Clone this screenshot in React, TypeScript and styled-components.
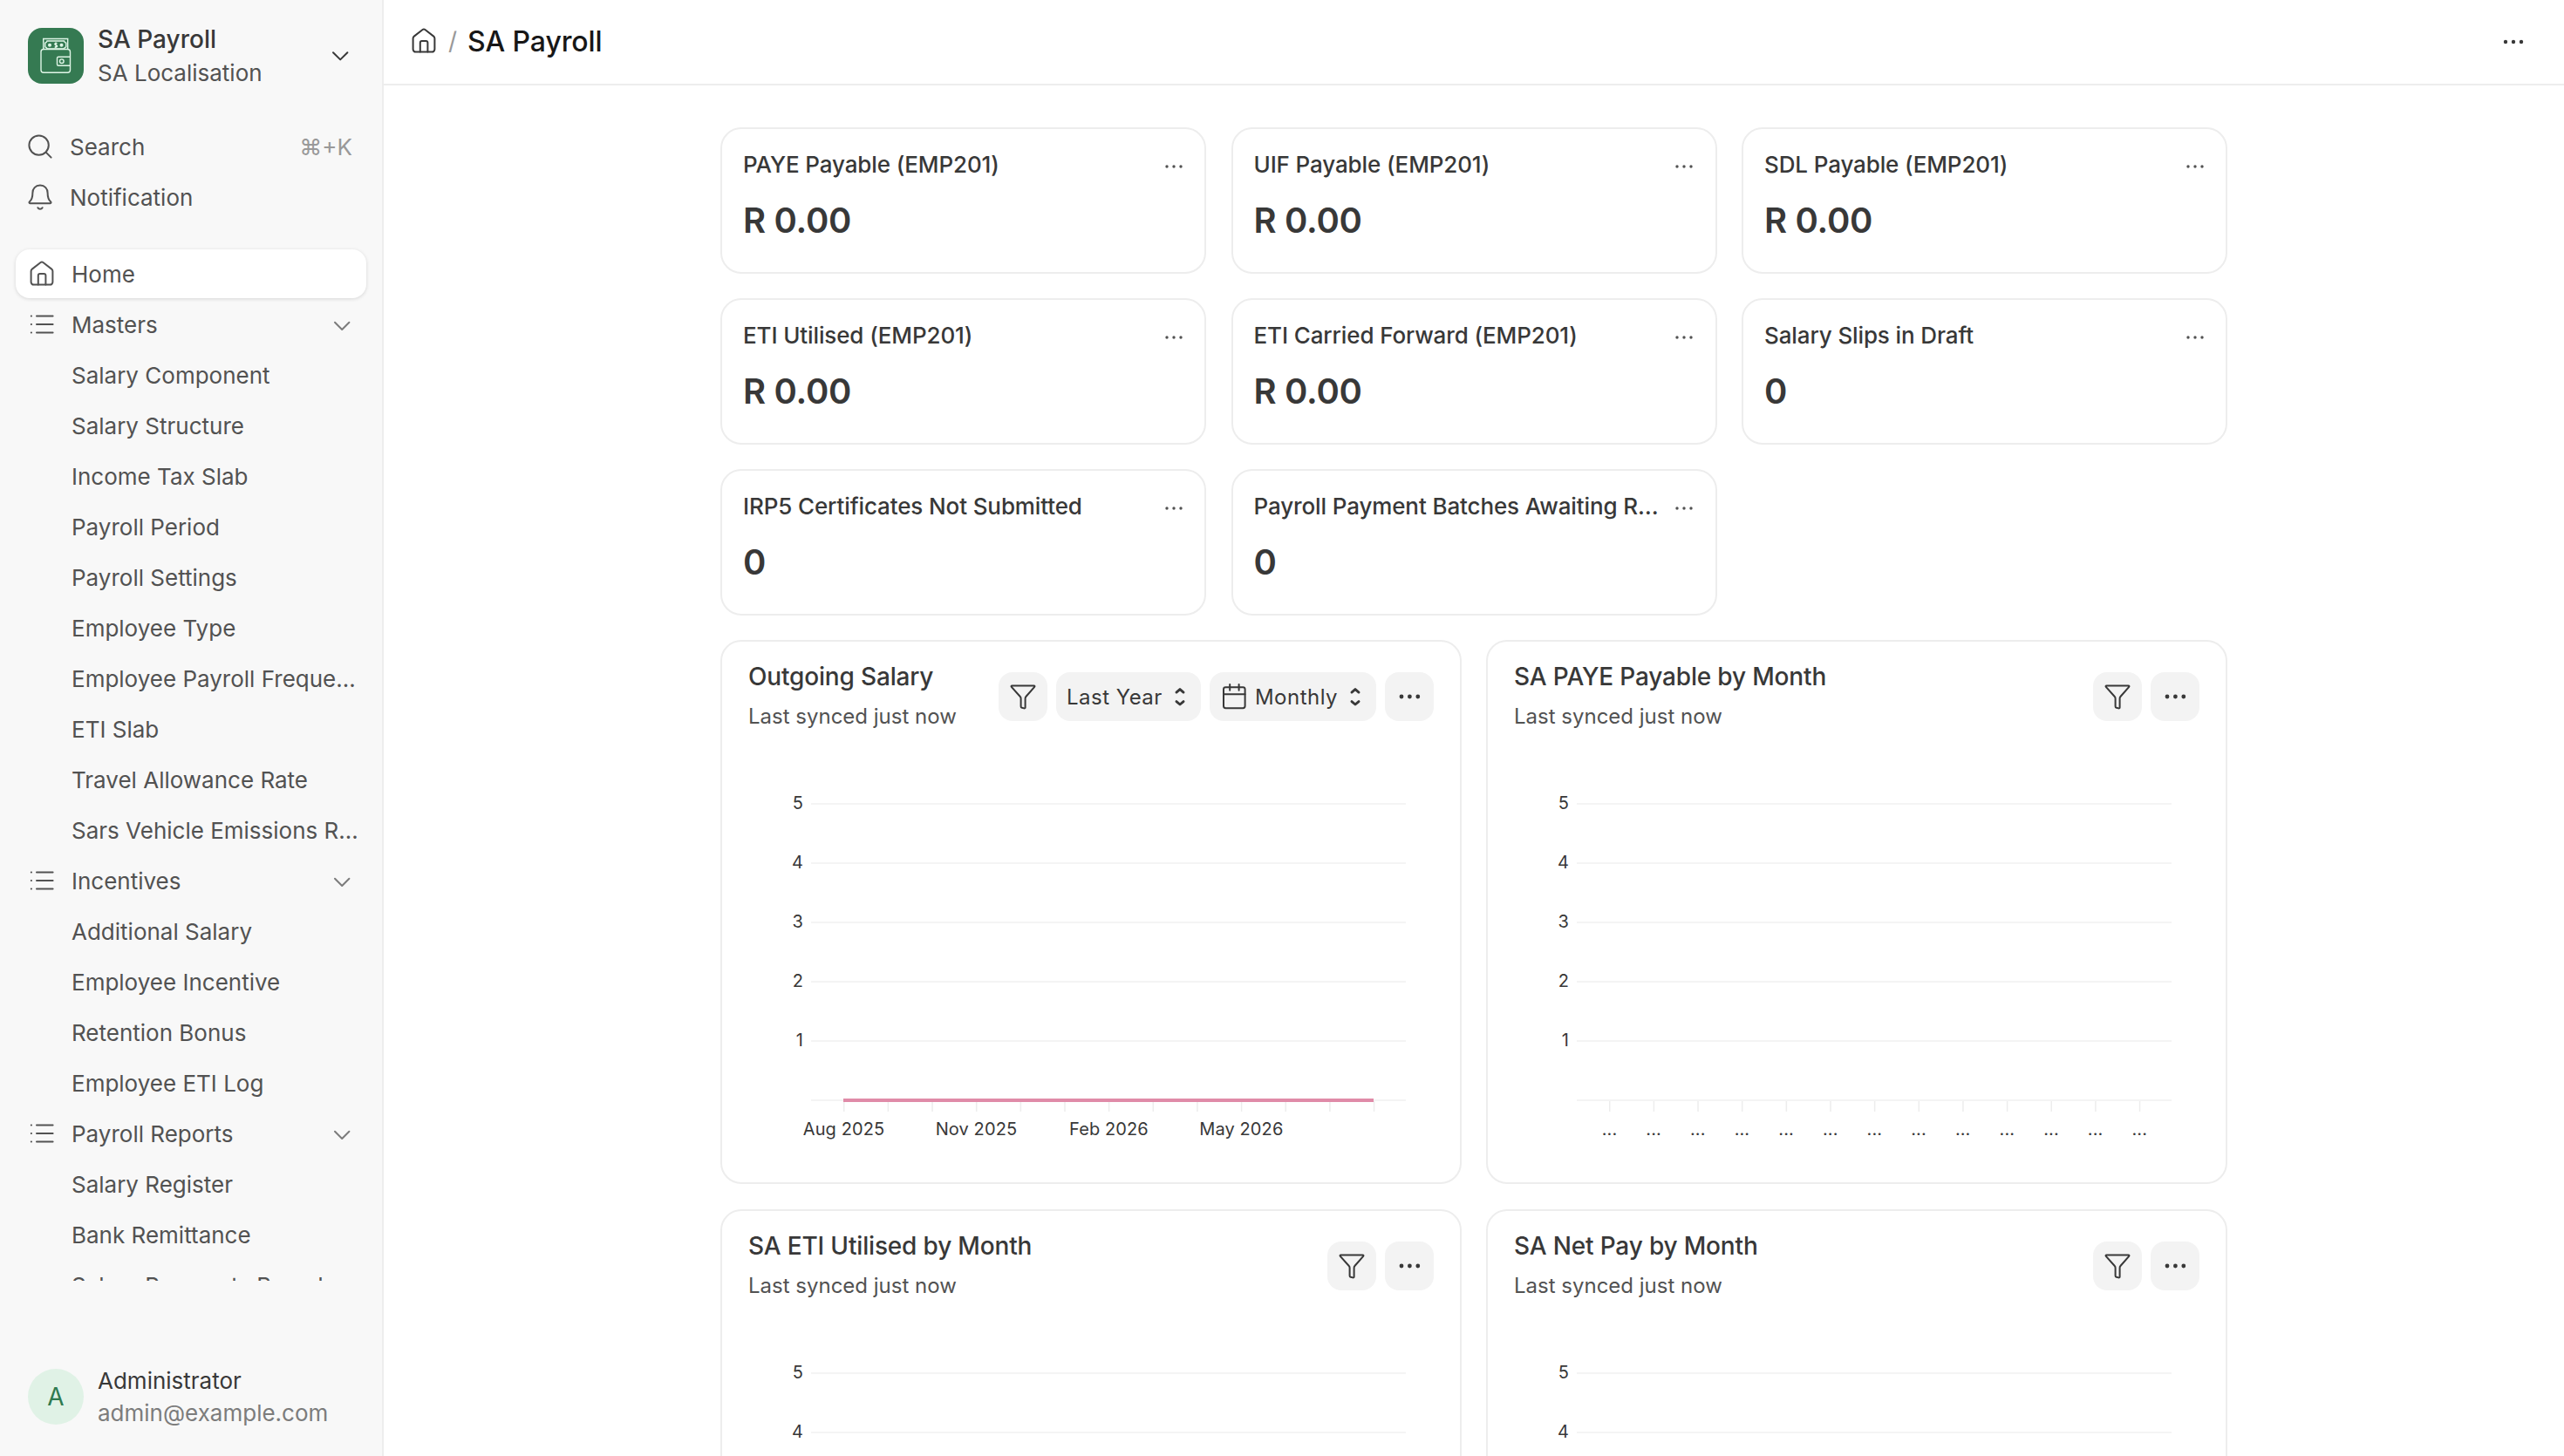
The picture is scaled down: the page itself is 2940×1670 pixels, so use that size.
import React from "react";
import styled, { createGlobalStyle } from "styled-components";

const Global = createGlobalStyle`
  * { box-sizing: border-box; }
  body { margin: 0; background: #fff; overflow: hidden; }
`;

const SANS = `Inter, "Liberation Sans", sans-serif`;

const Shell = styled.div`
  display: flex;
  width: 2940px;
  height: 1670px;
  overflow: hidden;
  font-family: ${SANS};
  font-size: 26px;
  letter-spacing: 0;
  color: #383838;
`;

const Sidebar = styled.aside`
  display: flex;
  flex-direction: column;
  width: 440px;
  height: 100%;
  padding: 32px 18px 36px;
  background: #f8f8f8;
  border-right: 2px solid #ededed;
  color: #525252;
`;

const Brand = styled.div`
  display: flex;
  align-items: center;
  height: 64px;
  padding: 0 14px;
  gap: 16px;
`;

const Names = styled.div`
  flex: 1;
  display: flex;
  flex-direction: column;
`;

const BrandTitle = styled.div`
  font-size: 28px;
  font-weight: 500;
  line-height: 38px;
  color: #383838;
  margin-top: -6px;
`;

const BrandSub = styled.div`
  margin: 1px 0 -7px;
  line-height: 38px;
`;

const Quick = styled.div`
  display: flex;
  flex-direction: column;
  margin-top: 44px;
  gap: 2px;
`;

const QuickRow = styled.div`
  display: flex;
  align-items: center;
  height: 56px;
  padding: 0 16px 0 12px;
  gap: 18px;
`;

const Hint = styled.span`
  margin-left: auto;
  color: #999;
`;

const Nav = styled.nav`
  display: flex;
  flex-direction: column;
  gap: 2px;
  height: 1187px;
  margin: 28px -4px 0;
  padding: 4px 4px 0;
  overflow: hidden;
`;

const NavRow = styled.div<{ $active?: boolean; $child?: boolean }>`
  flex: none;
  display: flex;
  align-items: center;
  gap: 18px;
  height: 56px;
  padding: 0 ${(p) => (p.$child ? 0 : 14)}px 0 ${(p) => (p.$child ? 64 : 14)}px;
  border-radius: 16px;
  background: ${(p) => (p.$active ? "#fff" : "transparent")};
  box-shadow: ${(p) => (p.$active ? "0 1px 4px rgba(0,0,0,0.14)" : "none")};
`;

const NavText = styled.span`
  flex: 1;
  padding-top: 2px;
  white-space: nowrap;
  line-height: 40px;
`;

const User = styled.div`
  display: flex;
  align-items: center;
  gap: 16px;
  height: 64px;
  padding: 0 14px;
  margin-top: auto;
`;

const Avatar = styled.div`
  display: flex;
  align-items: center;
  justify-content: center;
  width: 64px;
  height: 64px;
  border-radius: 50%;
  background: #e0f2e6;
  color: #2f7a4f;
  font-size: 28px;
`;

const UserName = styled.div`
  line-height: 38px;
  color: #383838;
`;

const UserMail = styled.div`
  line-height: 36px;
  color: #7c7c7c;
`;

const Main = styled.main`
  flex: 1;
  display: flex;
  flex-direction: column;
  min-width: 0;
  height: 100%;
`;

const TopBar = styled.header`
  flex: none;
  display: flex;
  align-items: center;
  height: 98px;
  padding: 0 45px 2px 30px;
  border-bottom: 2px solid #ededed;
`;

const Slash = styled.span`
  margin: 0 12px 0 12px;
  font-size: 28px;
  color: #999;
`;

const PageTitle = styled.h1`
  flex: 1;
  margin: 0;
  font-size: 32px;
  font-weight: 500;
  letter-spacing: -0.1px;
  color: #171717;
`;

const PageMenu = styled.div`
  display: flex;
  padding-top: 2px;
`;

const Body = styled.div`
  display: flex;
  flex-direction: column;
  gap: 28px;
  width: 1728px;
  margin: 48px 0 0 386px;
`;

const StatGrid = styled.section`
  display: grid;
  grid-template-columns: repeat(3, 557px);
  column-gap: 28.5px;
  row-gap: 28px;
`;

const StatCard = styled.article`
  display: flex;
  flex-direction: column;
  height: 168px;
  padding: 23px 23.5px 20px 24px;
  border: 2px solid #ededed;
  border-radius: 24px;
`;

const StatHead = styled.div`
  display: flex;
  align-items: center;
  justify-content: space-between;
  height: 36px;
`;

const StatMenu = styled.div`
  display: flex;
  padding-top: 4px;
`;

const StatTitle = styled.div`
  font-weight: 460;
  line-height: 36px;
  letter-spacing: -0.12px;
  white-space: nowrap;
`;

const StatValue = styled.div`
  margin-top: 20px;
  font-size: 40px;
  font-weight: 600;
  line-height: 52px;
  letter-spacing: -0.3px;
`;

const ChartGrid = styled.section`
  display: grid;
  grid-template-columns: repeat(2, 850px);
  column-gap: 28px;
  row-gap: 28.500px;
`;

const ChartCard = styled.article`
  height: 624px;
  padding: 20px 30px;
  border: 2px solid #ededed;
  border-radius: 24px;
`;

const ChartHead = styled.div`
  display: flex;
  justify-content: space-between;
  height: 88px;
`;

const ChartTitle = styled.div`
  font-size: 28px;
  font-weight: 500;
  line-height: 40px;
  letter-spacing: -0.17px;
`;

const ChartSub = styled.div`
  margin-top: 7px;
  font-size: 24px;
  line-height: 38px;
  color: #525252;
`;

const Actions = styled.div`
  display: flex;
  gap: 10px;
  padding-top: 15px;
`;

const Button = styled.div<{ $width: number }>`
  display: flex;
  align-items: center;
  justify-content: ${(p) => (p.$width > 60 ? "space-between" : "center")};
  width: ${(p) => p.$width}px;
  height: 56px;
  padding: 0 ${(p) => (p.$width > 60 ? 12 : 0)}px;
  border-radius: 16px;
  background: #f3f3f3;
  font-size: 24px;
  font-weight: 400;
  letter-spacing: 0.02em;
`;

const Plot = styled.svg`
  display: block;
  width: 786px;
  height: 480px;
  font-family: ${SANS};
  font-size: 20px;
  letter-spacing: 0.1px;
  fill: #383838;
`;

type IconProps = { size: number; stroke?: string; w?: number; children: React.ReactNode };
const Icon = ({ size, stroke = "#525252", w = 1, children }: IconProps) => (
  <svg width={size} height={size} viewBox="0 0 16 16" fill="none" stroke={stroke} strokeWidth={w} strokeLinecap="round" strokeLinejoin="round">
    {children}
  </svg>
);

const HomeIcon = ({ color }: { color?: string }) => (
  <Icon size={32} stroke={color}>
    <path d="M1.800 6.500c0-.5.200-.9.600-1.200L7.300 1.500c.4-.3 1-.3 1.400 0l4.900 3.800c.4.300.6.700.6 1.200v6.300c0 .8-.7 1.500-1.500 1.500H3.300c-.8 0-1.500-.7-1.500-1.500z" />
    <path d="M5.900 14.300V9c0-.6.400-1 1-1h2.300c.6 0 1 .4 1 1v5.300" />
  </Icon>
);

const ListIcon = () => (
  <Icon size={32}>
    <path d="M5 3.200h9.300M5 8h9.300M5 12.800h9.300M1.900 3.200h.1M1.900 8h.1M1.900 12.800h.1" />
  </Icon>
);

const SearchIcon = () => (
  <Icon size={32}>
    <circle cx="7.300" cy="7.300" r="5.600" />
    <path d="m11.300 11.300 3 3" />
  </Icon>
);

const BellIcon = () => (
  <Icon size={32}>
    <path d="M8 1.300c-2.700 0-4.300 1.900-4.300 4.300 0 2.900-.7 4.200-1.800 5.100-.3.300-.2.900.3.900h11.600c.5 0 .6-.6.300-.9-1.100-.9-1.800-2.200-1.800-5.100C12.300 3.200 10.700 1.300 8 1.300z" />
    <path d="M6.700 14.100c.3.600.7.800 1.300.8s1-.2 1.300-.8" />
  </Icon>
);

const ChevronIcon = ({ color }: { color: string }) => (
  <Icon size={32} stroke={color}>
    <path d="M4 6.100l4.100 4.100 4.100-4.100" />
  </Icon>
);

const GroupChevronIcon = () => (
  <Icon size={32} stroke="#7c7c7c">
    <path d="M5 6.900l4.100 4.100 4.100-4.100" />
  </Icon>
);

const FilterIcon = () => (
  <Icon size={32} stroke="#383838">
    <path d="M1.700 1.700h12.600c.4 0 .6.400.3.700L9.700 8c-.3.300-.4.700-.4 1.100v5.100c0 .4-.3.600-.7.500l-1.200-.3c-.4-.1-.6-.4-.6-.8V9.100c0-.4-.1-.8-.4-1.100L1.400 2.400c-.3-.3-.1-.7.300-.7z" />
  </Icon>
);

const CalendarIcon = () => (
  <Icon size={32} stroke="#383838">
    <rect x="2" y="2.600" width="12.300" height="12" rx="1.200" />
    <path d="M2 6.600h12.300M5.600 1v3.400M10.800 1v3.400" />
  </Icon>
);

const SortIcon = () => (
  <Icon size={24} stroke="#383838" w={1.900}>
    <path d="M5.300 4.700 8 2.400l2.700 2.300M5.300 11.700l2.700 2.300 2.700-2.300" />
  </Icon>
);

const Dots = ({ gap, r, color }: { gap: number; r: number; color: string }) => (
  <svg width={gap * 2 + 8} height="16" viewBox={`0 0 ${gap * 2 + 8} 16`} fill={color}>
    {[0, 1, 2].map((i) => (
      <circle key={i} cx={4 + i * gap} cy="8" r={r} />
    ))}
  </svg>
);

const Logo = () => (
  <svg width="64" height="64" viewBox="0 0 64 64" fill="none" stroke="#dff5e6" strokeWidth="1.400">
    <rect width="64" height="64" rx="16" fill="#357a52" stroke="none" />
    <path d="M17.700 24V12.500h28V24" />
    <path d="M22 15h19.500c.3 1.200 1 2 2.300 2.300v4.400c-1.300.3-2 1-2.300 2.300H22c-.3-1.200-1-2-2.300-2.300v-4.400c1.300-.3 2-1.100 2.300-2.300z" />
    <circle cx="25" cy="19.800" r="1.300" fill="#dff5e6" />
    <circle cx="38.500" cy="19.800" r="1.300" fill="#dff5e6" />
    <path d="M33.500 17.800c-1.500-.9-3 0-2.600 1 .4 1.200 2.500.7 2.700 2 .1 1.100-1.600 1.700-2.900.8M32 16.500v6.600" />
    <rect x="15" y="24.500" width="33.500" height="26.800" rx="3" />
    <path d="M48.500 33.200H35c-1 0-1.500.5-1.500 1.500v7c0 1 .5 1.500 1.500 1.500h13.500" />
    <circle cx="38.800" cy="38.200" r="2.300" />
  </svg>
);

const nav: { label: string; kind: "home" | "group" | "child" }[] = [
  { label: "Home", kind: "home" },
  { label: "Masters", kind: "group" },
  { label: "Salary Component", kind: "child" },
  { label: "Salary Structure", kind: "child" },
  { label: "Income Tax Slab", kind: "child" },
  { label: "Payroll Period", kind: "child" },
  { label: "Payroll Settings", kind: "child" },
  { label: "Employee Type", kind: "child" },
  { label: "Employee Payroll Freque…", kind: "child" },
  { label: "ETI Slab", kind: "child" },
  { label: "Travel Allowance Rate", kind: "child" },
  { label: "Sars Vehicle Emissions R…", kind: "child" },
  { label: "Incentives", kind: "group" },
  { label: "Additional Salary", kind: "child" },
  { label: "Employee Incentive", kind: "child" },
  { label: "Retention Bonus", kind: "child" },
  { label: "Employee ETI Log", kind: "child" },
  { label: "Payroll Reports", kind: "group" },
  { label: "Salary Register", kind: "child" },
  { label: "Bank Remittance", kind: "child" },
  { label: "Salary Payments Based", kind: "child" },
];

const stats = [
  ["PAYE Payable (EMP201)", "R 0.00"],
  ["UIF Payable (EMP201)", "R 0.00"],
  ["SDL Payable (EMP201)", "R 0.00"],
  ["ETI Utilised (EMP201)", "R 0.00"],
  ["ETI Carried Forward (EMP201)", "R 0.00"],
  ["Salary Slips in Draft", "0"],
  ["IRP5 Certificates Not Submitted", "0"],
  ["Payroll Payment Batches Awaiting R…", "0"],
];

const charts = [
  { title: "Outgoing Salary", series: true },
  { title: "SA PAYE Payable by Month", series: false },
  { title: "SA ETI Utilised by Month", series: false },
  { title: "SA Net Pay by Month", series: false },
];

const months = ["Aug 2025", "", "", "Nov 2025", "", "", "Feb 2026", "", "", "May 2026", "", "", ""];

const Chart = ({ series }: { series: boolean }) => (
  <Plot viewBox="0 0 786 480">
    {[5, 4, 3, 2, 1, 0].map((n, i) => (
      <g key={n}>
        <rect x="72" y={77 + i * 68} width="682" height="2" fill="#f4f4f4" />
        {n > 0 && <text x="63" y={84 + i * 68} textAnchor="end">{n}</text>}
      </g>
    ))}
    {months.map((m, i) => {
      const x = 109.500 + i * 50.650;
      return (
        <g key={i}>
          <rect x={x - 0.5} y="419" width="1.500" height="12" fill="#ededed" />
          <text x={x} y="458" textAnchor="middle">{series ? m : "..."}</text>
        </g>
      );
    })}
    {series && <rect x="109" y="416" width="608" height="4" fill="#e08ba8" />}
  </Plot>
);

export default function App() {
  return (
    <Shell>
      <Global />
      <Sidebar>
        <Brand>
          <Logo />
          <Names>
            <BrandTitle>SA Payroll</BrandTitle>
            <BrandSub>SA Localisation</BrandSub>
          </Names>
          <ChevronIcon color="#383838" />
        </Brand>
        <Quick>
          <QuickRow><SearchIcon />Search<Hint>⌘+K</Hint></QuickRow>
          <QuickRow><BellIcon />Notification</QuickRow>
        </Quick>
        <Nav>
          {nav.map((n) => (
            <NavRow key={n.label} $active={n.kind === "home"} $child={n.kind === "child"}>
              {n.kind === "home" && <HomeIcon />}
              {n.kind === "group" && <ListIcon />}
              <NavText>{n.label}</NavText>
              {n.kind === "group" && <GroupChevronIcon />}
            </NavRow>
          ))}
        </Nav>
        <User>
          <Avatar>A</Avatar>
          <Names>
            <UserName>Administrator</UserName>
            <UserMail>admin@example.com</UserMail>
          </Names>
        </User>
      </Sidebar>
      <Main>
        <TopBar>
          <HomeIcon color="#383838" />
          <Slash>/</Slash>
          <PageTitle>SA Payroll</PageTitle>
          <PageMenu><Dots gap={9} r={2.200} color="#383838" /></PageMenu>
        </TopBar>
        <Body>
          <StatGrid>
            {stats.map(([title, value]) => (
              <StatCard key={title}>
                <StatHead>
                  <StatTitle>{title}</StatTitle>
                  <StatMenu><Dots gap={8} r={1.700} color="#525252" /></StatMenu>
                </StatHead>
                <StatValue>{value}</StatValue>
              </StatCard>
            ))}
          </StatGrid>
          <ChartGrid>
            {charts.map((c) => (
              <ChartCard key={c.title}>
                <ChartHead>
                  <div>
                    <ChartTitle>{c.title}</ChartTitle>
                    <ChartSub>Last synced just now</ChartSub>
                  </div>
                  <Actions>
                    <Button $width={56}><FilterIcon /></Button>
                    {c.series && <Button $width={166}>Last Year<SortIcon /></Button>}
                    {c.series && <Button $width={191}><CalendarIcon />Monthly<SortIcon /></Button>}
                    <Button $width={56}><Dots gap={9.400} r={2.400} color="#383838" /></Button>
                  </Actions>
                </ChartHead>
                <Chart series={c.series} />
              </ChartCard>
            ))}
          </ChartGrid>
        </Body>
      </Main>
    </Shell>
  );
}
